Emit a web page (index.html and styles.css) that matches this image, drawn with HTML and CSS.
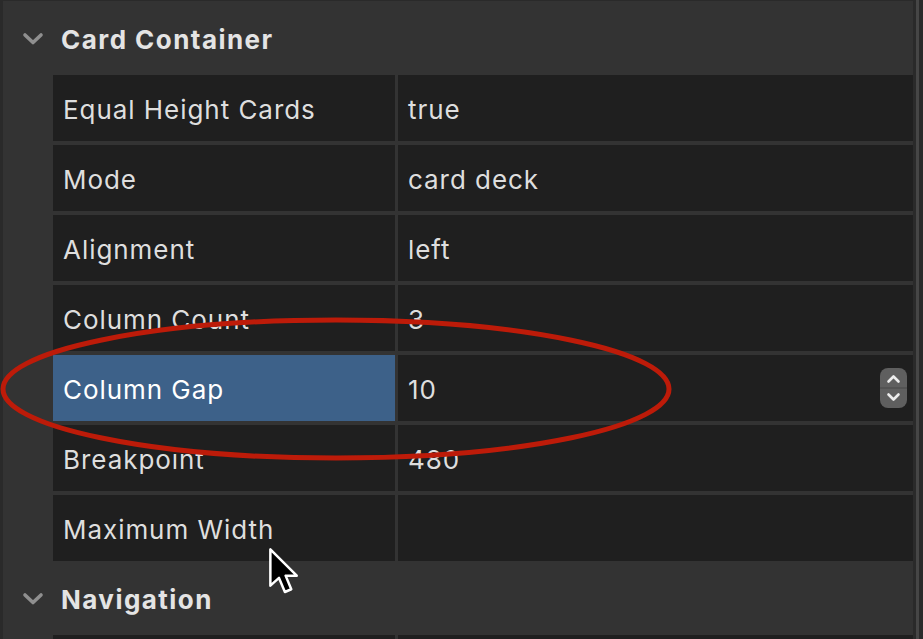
FILE: index.html
```html
<!DOCTYPE html>
<html>
<head>
<meta charset="utf-8">
<link rel="stylesheet" href="styles.css">
</head>
<body>
<div class="window">
  <div class="panel">
    <section class="group">
      <div class="group-head">
        <svg class="chev" width="22" height="14" viewBox="0 0 22 14"><path d="M3 3 L11 10.5 L19 3" fill="none" stroke="#8f8f8f" stroke-width="3.6" stroke-linecap="round" stroke-linejoin="round"/></svg>
        <span class="group-title">Card Container</span>
      </div>
      <div class="rows">
        <div class="row"><div class="name">Equal Height Cards</div><div class="value">true</div></div>
        <div class="row"><div class="name">Mode</div><div class="value">card deck</div></div>
        <div class="row"><div class="name">Alignment</div><div class="value">left</div></div>
        <div class="row"><div class="name">Column Count</div><div class="value">3</div></div>
        <div class="row"><div class="name selected">Column Gap</div><div class="value"><span>10</span>
          <span class="stepper">
            <svg width="27" height="40" viewBox="0 0 27 40">
              <rect x="0" y="0" width="27" height="40" rx="8" fill="#5f5f5f"/>
              <line x1="0" y1="20" x2="27" y2="20" stroke="#4b4b4b" stroke-width="1.2"/>
              <path d="M8.5 13.5 L13.5 8.5 L18.5 13.5" fill="none" stroke="#ececec" stroke-width="2.6" stroke-linecap="round" stroke-linejoin="round"/>
              <path d="M8.5 26.5 L13.5 31.5 L18.5 26.5" fill="none" stroke="#ececec" stroke-width="2.6" stroke-linecap="round" stroke-linejoin="round"/>
            </svg>
          </span></div></div>
        <div class="row"><div class="name">Breakpoint</div><div class="value">480</div></div>
        <div class="row"><div class="name">Maximum Width</div><div class="value"></div></div>
      </div>
    </section>
    <section class="group">
      <div class="group-head">
        <svg class="chev" width="22" height="14" viewBox="0 0 22 14"><path d="M3 3 L11 10.5 L19 3" fill="none" stroke="#8f8f8f" stroke-width="3.6" stroke-linecap="round" stroke-linejoin="round"/></svg>
        <span class="group-title">Navigation</span>
      </div>
      <div class="rows">
        <div class="row"><div class="name"></div><div class="value"></div></div>
      </div>
    </section>
  </div>
  <div class="scroll-edge"></div>

  <svg class="annotation" width="923" height="639" viewBox="0 0 923 639">
    <ellipse cx="336" cy="389" rx="333" ry="69" fill="none" stroke="#bd1b09" stroke-width="5"/>
  </svg>
  <svg class="cursor" width="32" height="50" viewBox="0 0 14 22">
    <path d="M1 1 L1 17 L4.8 13.6 L7.4 19.8 L10.2 18.6 L7.7 12.6 L12.6 12.6 Z" fill="#000" stroke="#fff" stroke-width="1.1" stroke-linejoin="round"/>
  </svg>
</div>
</body>
</html>
```

FILE: styles.css
```css
html, body {
  margin: 0;
  padding: 0;
  background: #333333;
}

.window {
  position: relative;
  width: 923px;
  height: 639px;
  overflow: hidden;
  display: flex;
  background: #2a2a2a;
  font-family: Inter, "Noto Sans", "Liberation Sans", sans-serif;
}

.panel {
  width: 910px;
  margin-left: 3px;
  margin-top: 1px;
  background: #333333;
  display: flex;
  flex-direction: column;
  flex: none;
}

.scroll-edge {
  width: 3px;
  margin-left: 3px;
  background: #464646;
  flex: none;
}

.group-head {
  height: 74px;
  display: flex;
  align-items: center;
  padding-left: 19px;
}

.chev {
  display: block;
  margin-right: 17px;
  margin-top: 2px;
}

.group-title {
  color: #e4e4e4;
  font-weight: 700;
  font-size: 26px;
  letter-spacing: 1.45px;
  padding-top: 3px;
}

.rows {
  display: flex;
  flex-direction: column;
  gap: 4px;
  padding-left: 50px;
}

.row {
  height: 66px;
  display: grid;
  grid-template-columns: 342px 1fr;
  column-gap: 3px;
}

.name, .value {
  background: #1f1f1f;
  color: #dedede;
  font-size: 26px;
  letter-spacing: 0.95px;
  display: flex;
  align-items: center;
  padding-left: 10px;
  padding-top: 3px;
  box-sizing: border-box;
}

.value {
  justify-content: space-between;
  padding-left: 10px;
  padding-right: 6px;
}

.name.selected {
  background: #3d6189;
  color: #ffffff;
}

.stepper {
  display: block;
  height: 40px;
  margin-top: -4px;
}

.stepper svg {
  display: block;
}

.annotation {
  position: absolute;
  left: 0;
  top: 0;
  pointer-events: none;
}

.cursor {
  position: absolute;
  left: 268px;
  top: 547px;
  pointer-events: none;
}
```
